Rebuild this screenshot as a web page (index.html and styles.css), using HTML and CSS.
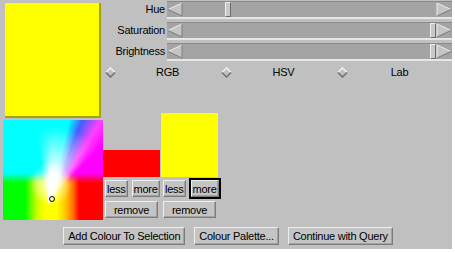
FILE: index.html
```html
<!DOCTYPE html>
<html lang="en">
<head>
  <meta charset="UTF-8">
  <title>Colour Selector</title>
  <link rel="stylesheet" href="styles.css">
</head>
<body>
  <div class="window">
    <div class="main">
      <div class="left">
        <div class="preview"></div>
        <div class="map"><span class="glow"></span><span class="marker"></span></div>
      </div>

      <div class="right">
        <div class="slider-row">
          <span class="label">Hue</span>
          <div class="track">
            <svg class="arrow" width="16" height="15" viewBox="0 0 16 15"><polygon points="1,7.5 15,1 15,14" fill="#c4c4c4"/><line x1="1" y1="7.5" x2="15" y2="1" stroke="#ececec"/><line x1="1" y1="7.5" x2="15" y2="14" stroke="#7c7c7c"/><line x1="15" y1="1" x2="15" y2="14" stroke="#7c7c7c"/></svg>
            <span class="thumb" style="left:58px"></span>
            <svg class="arrow" width="16" height="15" viewBox="0 0 16 15"><polygon points="15,7.5 1,1 1,14" fill="#c4c4c4"/><line x1="1" y1="1" x2="1" y2="14" stroke="#ececec"/><line x1="1" y1="1" x2="15" y2="7.5" stroke="#ececec"/><line x1="1" y1="14" x2="15" y2="7.5" stroke="#7c7c7c"/></svg>
          </div>
        </div>
        <div class="slider-row">
          <span class="label">Saturation</span>
          <div class="track">
            <svg class="arrow" width="16" height="15" viewBox="0 0 16 15"><polygon points="1,7.5 15,1 15,14" fill="#c4c4c4"/><line x1="1" y1="7.5" x2="15" y2="1" stroke="#ececec"/><line x1="1" y1="7.5" x2="15" y2="14" stroke="#7c7c7c"/><line x1="15" y1="1" x2="15" y2="14" stroke="#7c7c7c"/></svg>
            <span class="thumb" style="left:263px"></span>
            <svg class="arrow" width="16" height="15" viewBox="0 0 16 15"><polygon points="15,7.5 1,1 1,14" fill="#c4c4c4"/><line x1="1" y1="1" x2="1" y2="14" stroke="#ececec"/><line x1="1" y1="1" x2="15" y2="7.5" stroke="#ececec"/><line x1="1" y1="14" x2="15" y2="7.5" stroke="#7c7c7c"/></svg>
          </div>
        </div>
        <div class="slider-row">
          <span class="label">Brightness</span>
          <div class="track">
            <svg class="arrow" width="16" height="15" viewBox="0 0 16 15"><polygon points="1,7.5 15,1 15,14" fill="#c4c4c4"/><line x1="1" y1="7.5" x2="15" y2="1" stroke="#ececec"/><line x1="1" y1="7.5" x2="15" y2="14" stroke="#7c7c7c"/><line x1="15" y1="1" x2="15" y2="14" stroke="#7c7c7c"/></svg>
            <span class="thumb" style="left:263px"></span>
            <svg class="arrow" width="16" height="15" viewBox="0 0 16 15"><polygon points="15,7.5 1,1 1,14" fill="#c4c4c4"/><line x1="1" y1="1" x2="1" y2="14" stroke="#ececec"/><line x1="1" y1="1" x2="15" y2="7.5" stroke="#ececec"/><line x1="1" y1="14" x2="15" y2="7.5" stroke="#7c7c7c"/></svg>
          </div>
        </div>

        <div class="modes">
          <div class="mode">
            <svg class="diamond" width="11" height="11" viewBox="0 0 11 11"><polygon points="5.5,1 10,5.5 5.5,10 1,5.5" fill="#c0c0c0"/><polyline points="1,5.5 5.5,1 10,5.5" fill="none" stroke="#f0f0f0" stroke-width="1.5"/><polyline points="1,5.5 5.5,10 10,5.5" fill="none" stroke="#707070" stroke-width="1.5"/></svg>
            <span class="mode-name">RGB</span>
          </div>
          <div class="mode">
            <svg class="diamond" width="11" height="11" viewBox="0 0 11 11"><polygon points="5.5,1 10,5.5 5.5,10 1,5.5" fill="#c0c0c0"/><polyline points="1,5.5 5.5,1 10,5.5" fill="none" stroke="#f0f0f0" stroke-width="1.5"/><polyline points="1,5.5 5.5,10 10,5.5" fill="none" stroke="#707070" stroke-width="1.5"/></svg>
            <span class="mode-name">HSV</span>
          </div>
          <div class="mode">
            <svg class="diamond" width="11" height="11" viewBox="0 0 11 11"><polygon points="5.5,1 10,5.5 5.5,10 1,5.5" fill="#c0c0c0"/><polyline points="1,5.5 5.5,1 10,5.5" fill="none" stroke="#f0f0f0" stroke-width="1.5"/><polyline points="1,5.5 5.5,10 10,5.5" fill="none" stroke="#707070" stroke-width="1.5"/></svg>
            <span class="mode-name">Lab</span>
          </div>
        </div>

        <div class="swatches">
          <div class="swatch-col">
            <div class="bar-slot"><div class="bar" style="height:27px;background:#ff0000"></div></div>
            <div class="btn-row"><button class="btn">less</button><button class="btn">more</button></div>
            <button class="btn wide">remove</button>
          </div>
          <div class="swatch-col">
            <div class="bar-slot"><div class="bar" style="height:64px;background:#ffff00"></div></div>
            <div class="btn-row"><button class="btn">less</button><button class="btn focused">more</button></div>
            <button class="btn wide">remove</button>
          </div>
        </div>
      </div>
    </div>

    <div class="actions">
      <button class="btn">Add Colour To Selection</button>
      <button class="btn">Colour Palette...</button>
      <button class="btn">Continue with Query</button>
    </div>
  </div>
</body>
</html>
```

FILE: styles.css
```css
:root {
  --face: #c0c0c0;
  --light: #eeeeee;
  --dark: #7c7c7c;
}

body {
  margin: 0;
  background: #ffffff;
  font-family: "Liberation Sans", Arial, sans-serif;
  font-size: 11px;
  letter-spacing: -0.25px;
  color: #000;
}

.window {
  width: 452px;
  height: 249px;
  background: var(--face);
  display: flex;
  flex-direction: column;
}

.main {
  display: flex;
  padding-left: 3px;
}

/* left column: current colour + colour map */
.left {
  width: 100px;
  display: flex;
  flex-direction: column;
}

.preview {
  margin: 3px 2px 2px;
  height: 113px;
  background: #ffff00;
  border-right: 2px solid #a4a400;
  border-bottom: 2px solid #a4a400;
}

.map {
  position: relative;
  width: 100px;
  height: 100px;
  overflow: hidden;
  background: linear-gradient(to right, #00ff00 0%, #00ff00 22%, #c0ff00 33%, #ffff00 42%, #ffff00 54%, #ffc000 63%, #ff7000 70%, #ff0000 76%, #ff0000 100%);
}

/* upper hues, fading into the lower band */
.map::before {
  content: "";
  position: absolute;
  inset: 0;
  background: conic-gradient(from -90deg at 45% 85%, #00ffff 0deg, #00ffff 104deg, #4060ff 112deg, #ff40ff 122deg, #ff00ff 132deg, #ff00ff 270deg, #00ffff 360deg);
  -webkit-mask-image: linear-gradient(to bottom, #000 0%, #000 53%, transparent 63%);
  mask-image: linear-gradient(to bottom, #000 0%, #000 53%, transparent 63%);
}

/* white wedge towards the top right */
.map::after {
  content: "";
  position: absolute;
  inset: 0;
  background: conic-gradient(from -90deg at 45% 85%, rgba(255,255,255,0) 80deg, #fff 94deg, #fff 110deg, rgba(255,220,255,0) 130deg);
  -webkit-mask-image: radial-gradient(circle at 45% 85%, #000 30%, rgba(0,0,0,0.5) 55%, transparent 78%);
  mask-image: radial-gradient(circle at 45% 85%, #000 30%, rgba(0,0,0,0.5) 55%, transparent 78%);
}

.glow {
  position: absolute;
  inset: 0;
  z-index: 1;
  background: radial-gradient(circle at 48% 64%, rgba(255,255,255,0.9) 0, rgba(255,255,255,0.5) 12%, rgba(255,255,255,0) 26%);
}

.marker {
  position: absolute;
  left: 46px;
  top: 76px;
  width: 4px;
  height: 4px;
  border: 1px solid #000;
  border-radius: 50%;
  z-index: 2;
}

/* right column */
.right {
  width: 349px;
  display: flex;
  flex-direction: column;
}

.slider-row {
  display: flex;
  height: 21px;
}

.label {
  width: 62px;
  padding-right: 2px;
  text-align: right;
  line-height: 19px;
}

.track {
  position: relative;
  flex: 1;
  height: 15px;
  margin-top: 1px;
  display: flex;
  justify-content: space-between;
  background: #a4a4a4;
  border-top: 1px solid #8a8a8a;
  border-bottom: 2px solid #e6e6e6;
}

.arrow {
  display: block;
}

.thumb {
  position: absolute;
  top: 0;
  width: 4px;
  height: 13px;
  background: #c8c8c8;
  border: 1px solid;
  border-color: #ececec #6c6c6c #6c6c6c #ececec;
}

.modes {
  display: flex;
  height: 18px;
  align-items: center;
}

.mode {
  width: 116px;
  display: flex;
  align-items: center;
}

.diamond {
  margin-left: 2px;
  flex: none;
}

.mode-name {
  flex: 1;
  text-align: center;
}

/* swatches */
.swatches {
  display: flex;
  gap: 1px;
  margin-top: 32px;
}

.swatch-col {
  width: 57px;
  display: flex;
  flex-direction: column;
}

.bar-slot {
  height: 64px;
  display: flex;
  align-items: flex-end;
}

.bar {
  width: 57px;
}

.btn-row {
  display: flex;
  gap: 4px;
  padding-left: 2px;
  margin-top: 3px;
}

.btn {
  font: inherit;
  letter-spacing: inherit;
  color: #000;
  height: 17px;
  padding: 0 1px;
  line-height: 14px;
  background: #c4c4c4;
  border: 1px solid;
  border-color: var(--light) var(--dark) var(--dark) var(--light);
  box-shadow: inset -1px -1px 0 #a2a2a2;
  border-radius: 0;
}

.btn.focused {
  outline: 2px solid #000;
  outline-offset: 0;
  margin-left: 1px;
}

.btn.wide {
  width: 53px;
  margin: 4px 0 0 2px;
}

.actions {
  display: flex;
  justify-content: center;
  gap: 9px;
  margin-top: 7px;
  padding-left: 4px;
}

.actions .btn {
  height: 18px;
  padding: 0 4px;
}
```
